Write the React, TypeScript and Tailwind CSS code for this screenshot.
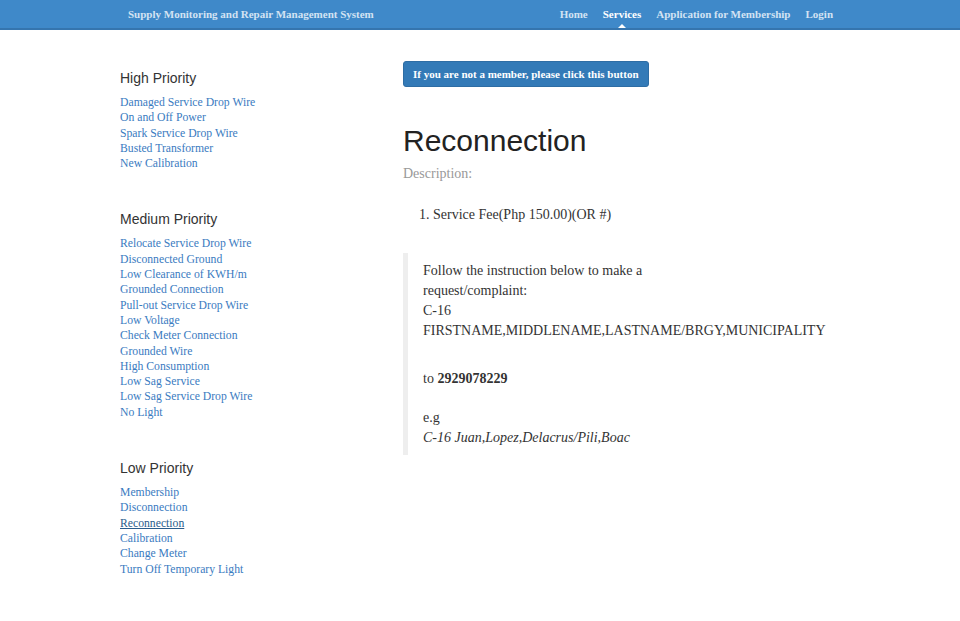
import React from 'react';

const serif = { fontFamily: 'Georgia, "Liberation Serif", "DejaVu Serif", serif' };

const groups = [
  {
    title: 'High Priority',
    items: ['Damaged Service Drop Wire', 'On and Off Power', 'Spark Service Drop Wire', 'Busted Transformer', 'New Calibration'],
  },
  {
    title: 'Medium Priority',
    items: [
      'Relocate Service Drop Wire',
      'Disconnected Ground',
      'Low Clearance of KWH/m',
      'Grounded Connection',
      'Pull-out Service Drop Wire',
      'Low Voltage',
      'Check Meter Connection',
      'Grounded Wire',
      'High Consumption',
      'Low Sag Service',
      'Low Sag Service Drop Wire',
      'No Light',
    ],
  },
  {
    title: 'Low Priority',
    items: ['Membership', 'Disconnection', 'Reconnection', 'Calibration', 'Change Meter', 'Turn Off Temporary Light'],
  },
];

function Navbar() {
  return (
    <nav className="h-[30px] bg-[#3f89c9] border-b-2 border-[#3575ae]">
      <div className="flex h-[28px] items-center justify-between pl-[128px] pr-[127px]">
        <span className="text-[11px] font-bold text-[#d3e3f3]" style={serif}>
          Supply Monitoring and Repair Management System
        </span>
        <ul className="flex h-full items-center gap-[15px] text-[11px] font-bold text-[#d3e3f3]" style={serif}>
          <li>Home</li>
          <li className="relative flex h-full items-center text-white">
            Services
            <span className="absolute bottom-0 left-1/2 -ml-[4px] h-0 w-0 border-x-[4px] border-b-[4px] border-x-transparent border-b-white" />
          </li>
          <li>Application for Membership</li>
          <li>Login</li>
        </ul>
      </div>
    </nav>
  );
}

function Sidebar() {
  return (
    <aside className="w-[283px] shrink-0 pt-[38px]">
      {groups.map((g, i) => (
        <div key={g.title} className={i > 0 ? 'mt-[38px]' : ''}>
          <h3 className="text-[14px] leading-[20px] text-[#333]" style={{ fontFamily: '"Liberation Sans", Arial, sans-serif' }}>
            {g.title}
          </h3>
          <ul className="mt-[7px] text-[11.7px] leading-[15.3px] text-[#3a7bbf]" style={serif}>
            {g.items.map((item) => (
              <li key={item} className={item === 'Reconnection' ? 'text-[#2a5d8c] underline' : ''}>
                {item}
              </li>
            ))}
          </ul>
        </div>
      ))}
    </aside>
  );
}

function Content() {
  return (
    <main className="flex-1 pt-[31px] text-[#333]" style={serif}>
      <button className="h-[26px] rounded-[3px] border border-[#2e6da4] bg-[#337ab7] px-[9px] text-[11px] font-bold text-white">
        If you are not a member, please click this button
      </button>
      <h1
        className="mt-[37px] text-[30px] leading-[34px] text-[#222]"
        style={{ fontFamily: '"Liberation Sans", Arial, sans-serif' }}
      >
        Reconnection
      </h1>
      <p className="mt-[6px] text-[14px] leading-[20px] text-[#999]">Description:</p>
      <ol className="mt-[21px] list-decimal pl-[30px] text-[14px] leading-[20px]">
        <li>Service Fee(Php 150.00)(OR #)</li>
      </ol>
      <blockquote className="mt-[28px] border-l-[5px] border-[#eee] pl-[15px] pt-[8px] pb-[7px] text-[14px] leading-[20px] whitespace-nowrap">
        <p>Follow the instruction below to make a</p>
        <p>request/complaint:</p>
        <p>C-16</p>
        <p>FIRSTNAME,MIDDLENAME,LASTNAME/BRGY,MUNICIPALITY</p>
        <p className="mt-[28px]">
          to <b>2929078229</b>
        </p>
        <p className="mt-[19px]">e.g</p>
        <p className="italic">C-16 Juan,Lopez,Delacrus/Pili,Boac</p>
      </blockquote>
    </main>
  );
}

export default function App() {
  return (
    <div className="min-h-[621px] bg-white">
      <Navbar />
      <div className="flex pl-[120px]">
        <Sidebar />
        <Content />
      </div>
    </div>
  );
}
